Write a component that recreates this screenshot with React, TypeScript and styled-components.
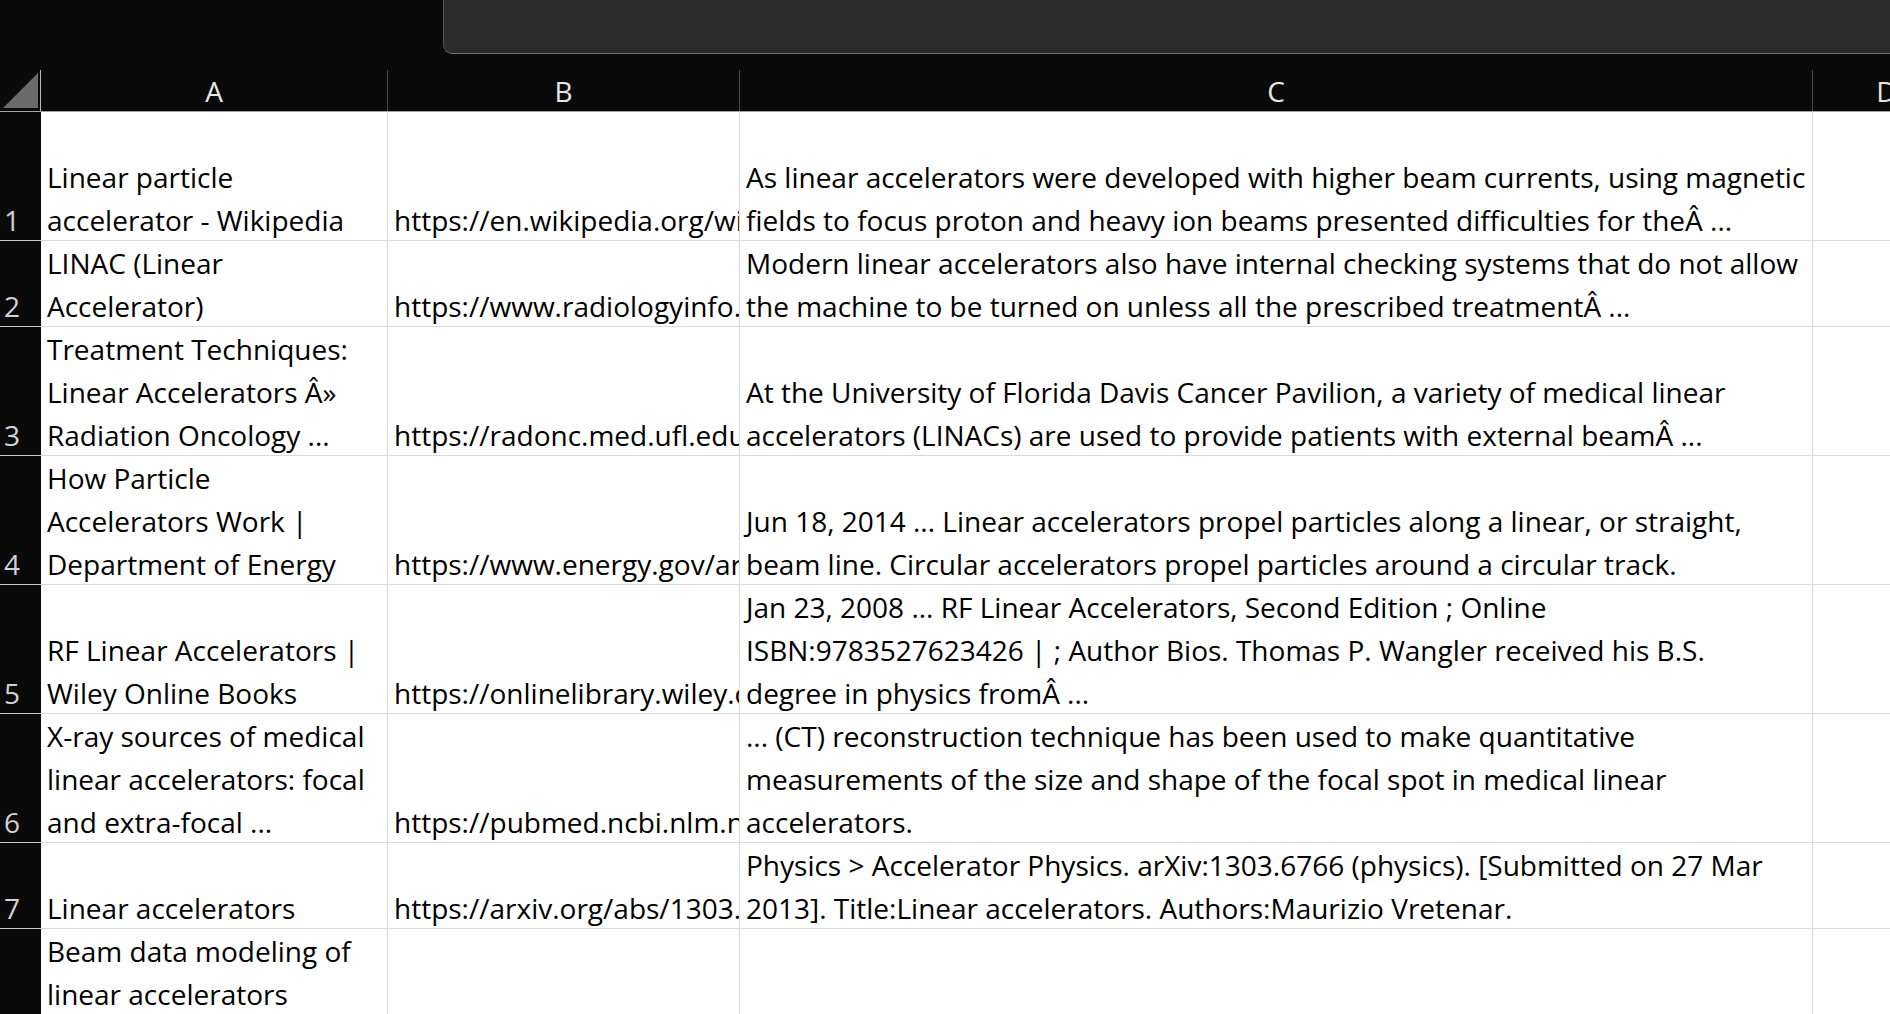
import { FC } from "react";
import styled, { createGlobalStyle } from "styled-components";

interface SheetRow {
    title: string;
    url: string;
    snippet: string;
    lines: number;
}

const COLUMNS = "41px 347px 352px 1073px 148px";
const LINE = 43;

const rows: SheetRow[] = [
    {
        title: "Linear particle\naccelerator - Wikipedia",
        url: "https://en.wikipedia.org/wiki/Linear_particle_accelerator",
        snippet: "As linear accelerators were developed with higher beam currents, using magnetic\nfields to focus proton and heavy ion beams presented difficulties for the\u00c2 ...",
        lines: 3,
    },
    {
        title: "LINAC (Linear\nAccelerator)",
        url: "https://www.radiologyinfo.org/en/info/linac",
        snippet: "Modern linear accelerators also have internal checking systems that do not allow\nthe machine to be turned on unless all the prescribed treatment\u00c2 ...",
        lines: 2,
    },
    {
        title: "Treatment Techniques:\nLinear Accelerators \u00c2\u00bb\nRadiation Oncology ...",
        url: "https://radonc.med.ufl.edu/patient-care/treatment-techniques/",
        snippet: "At the University of Florida Davis Cancer Pavilion, a variety of medical linear\naccelerators (LINACs) are used to provide patients with external beam\u00c2 ...",
        lines: 3,
    },
    {
        title: "How Particle\nAccelerators Work |\nDepartment of Energy",
        url: "https://www.energy.gov/articles/how-particle-accelerators-work",
        snippet: "Jun 18, 2014 ... Linear accelerators propel particles along a linear, or straight,\nbeam line. Circular accelerators propel particles around a circular track.",
        lines: 3,
    },
    {
        title: "RF Linear Accelerators |\nWiley Online Books",
        url: "https://onlinelibrary.wiley.com/doi/book/10.1002/9783527623426",
        snippet: "Jan 23, 2008 ... RF Linear Accelerators, Second Edition ; Online\nISBN:9783527623426 | ; Author Bios. Thomas P. Wangler received his B.S.\ndegree in physics from\u00c2 ...",
        lines: 3,
    },
    {
        title: "X-ray sources of medical\nlinear accelerators: focal\nand extra-focal ...",
        url: "https://pubmed.ncbi.nlm.nih.gov/10232578/",
        snippet: "... (CT) reconstruction technique has been used to make quantitative\nmeasurements of the size and shape of the focal spot in medical linear\naccelerators.",
        lines: 3,
    },
    {
        title: "Linear accelerators",
        url: "https://arxiv.org/abs/1303.6766",
        snippet: "Physics > Accelerator Physics. arXiv:1303.6766 (physics). [Submitted on 27 Mar\n2013]. Title:Linear accelerators. Authors:Maurizio Vretenar.",
        lines: 2,
    },
    {
        title: "Beam data modeling of\nlinear accelerators\n(linacs) through ...",
        url: "https://pubmed.ncbi.nlm.nih.gov/32073182/",
        snippet: "",
        lines: 3,
    },
];

const GlobalStyle = createGlobalStyle`
    html, body {
        margin: 0;
        padding: 0;
        background: #0a0a0a;
        overflow: hidden;
    }

    body {
        font-family: "Open Sans", "Liberation Sans", sans-serif;
    }
`;

const Page = styled.div`
    width: 1890px;
    height: 1014px;
    overflow: hidden;
    background: #0a0a0a;
    display: flex;
    flex-direction: column;
`;

const TopStrip = styled.div`
    height: 54px;
    flex-shrink: 0;
    display: flex;
`;

const NameArea = styled.div`
    width: 443px;
    flex-shrink: 0;
`;

const FormulaPanel = styled.div`
    flex: 1;
    background: #2b2b2b;
    border-left: 1px solid #505050;
    border-bottom: 1px solid #6a6a6a;
    border-bottom-left-radius: 9px;
    box-sizing: border-box;
`;

const HeaderRow = styled.div`
    display: grid;
    grid-template-columns: ${COLUMNS};
    height: 58px;
    padding-top: 16px;
    box-sizing: border-box;
    border-bottom: 1px solid #a3a3a3;
    flex-shrink: 0;
`;

const Corner = styled.div`
    display: flex;
    align-items: flex-end;
    justify-content: flex-end;
    padding: 0 2px 3px 0;
    border-right: 1px solid #b8b8b8;
    box-sizing: border-box;
`;

const ColumnHead = styled.div`
    display: flex;
    align-items: flex-end;
    justify-content: center;
    border-right: 1px solid #4a4a4a;
    color: #e6e6e6;
    font-size: 28px;
    line-height: 43px;
    overflow: hidden;
    white-space: nowrap;

    & span {
        margin-bottom: -2px;
    }
`;

const Row = styled.div<{ $lines: number }>`
    display: grid;
    grid-template-columns: ${COLUMNS};
    height: ${(p) => p.$lines * LINE}px;
    flex-shrink: 0;
`;

const RowNumber = styled.div`
    display: flex;
    align-items: flex-end;
    padding-left: 4px;
    background: #0a0a0a;
    color: #d2d2d2;
    font-size: 28px;
    line-height: 43px;
    border-bottom: 1px solid #c9c9c9;
    box-sizing: border-box;

    & span {
        margin-bottom: -2px;
    }
`;

const Cell = styled.div`
    display: flex;
    flex-direction: column;
    justify-content: flex-end;
    background: #ffffff;
    color: #000000;
    font-size: 28px;
    line-height: 43px;
    padding: 0 6px;
    white-space: pre;
    overflow: hidden;
    border-right: 1px solid #dadada;
    border-bottom: 1px solid #dadada;
    box-sizing: border-box;
`;

const CellText = styled.span`
    display: block;
    margin-bottom: -2px;
`;

const CornerMark: FC = () => (
    <svg width="35" height="35" viewBox="0 0 35 35">
        <polygon points="35,0 35,35 0,35" fill="#6b6b6b" />
    </svg>
);

const App: FC = () => {
    return (
        <Page>
            <GlobalStyle />
            <TopStrip>
                <NameArea />
                <FormulaPanel />
            </TopStrip>
            <HeaderRow>
                <Corner>
                    <CornerMark />
                </Corner>
                {["A", "B", "C", "D"].map((letter) => (
                    <ColumnHead key={letter}>
                        <span>{letter}</span>
                    </ColumnHead>
                ))}
            </HeaderRow>
            {rows.map((row, index) => (
                <Row key={index} $lines={row.lines}>
                    <RowNumber>
                        <span>{index + 1}</span>
                    </RowNumber>
                    <Cell>
                        <CellText>{row.title}</CellText>
                    </Cell>
                    <Cell>
                        <CellText>{row.url}</CellText>
                    </Cell>
                    <Cell>
                        <CellText>{row.snippet}</CellText>
                    </Cell>
                    <Cell />
                </Row>
            ))}
        </Page>
    );
};

export default App;
